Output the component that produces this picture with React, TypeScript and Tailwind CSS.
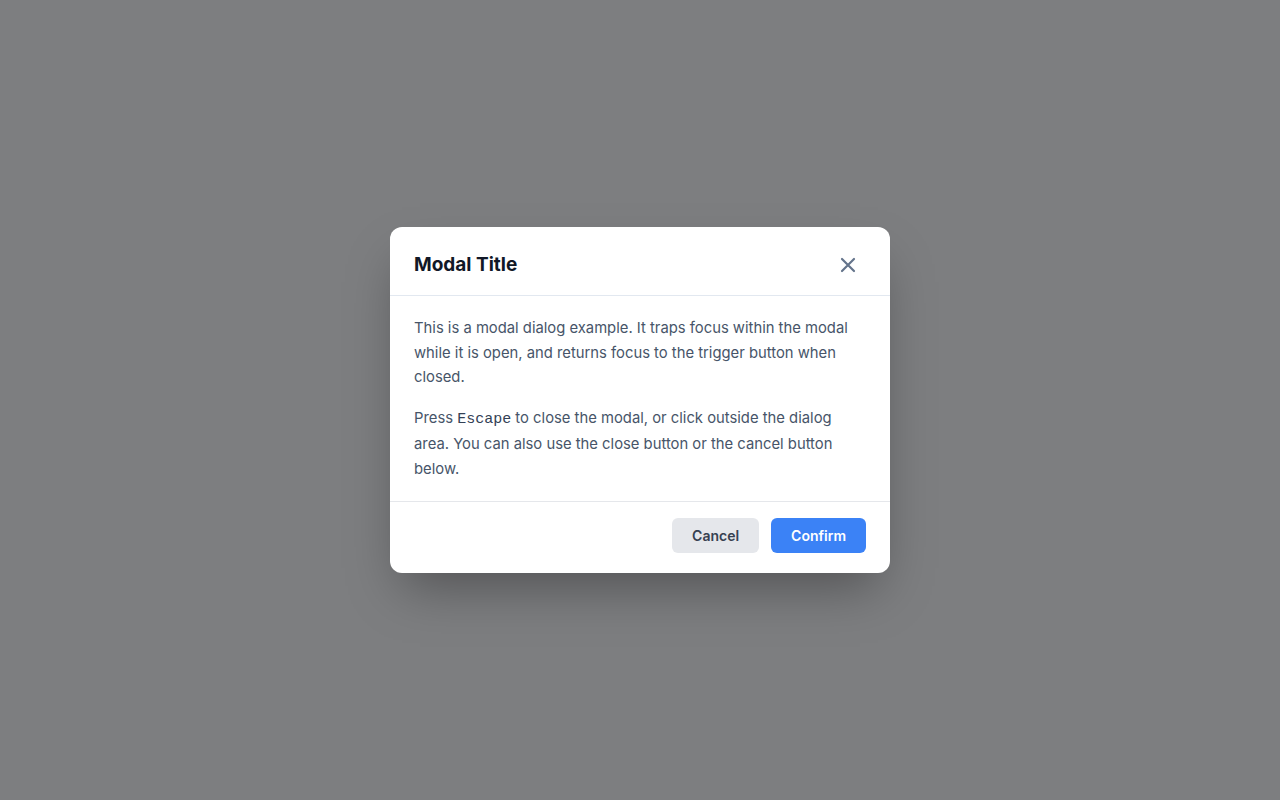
import React from "react";

const App = () => {
  return (
    <div className="min-h-screen w-full flex items-center justify-center bg-[#7d7e80] font-['Inter',sans-serif]">
      {/* Dialog */}
      <div className="w-[500px] bg-white rounded-xl shadow-[0_25px_50px_-12px_rgba(0,0,0,0.35)]">
        {/* Header */}
        <div className="flex items-center justify-between pl-6 pr-7 pt-6 pb-4 border-b border-[#e2e8f0]">
          <h2 className="text-[19px] leading-7 font-bold text-[#111827]">Modal Title</h2>
          <button className="w-7 h-7 flex items-center justify-center text-[#64748b] rounded-md" aria-label="Close">
            <svg width="24" height="24" viewBox="0 0 24 24" fill="none" stroke="currentColor" strokeWidth="2.2" strokeLinecap="round">
              <path d="M6 6l12 12M18 6L6 18" />
            </svg>
          </button>
        </div>

        {/* Body */}
        <div className="px-6 pt-5 pb-5 flex flex-col gap-4 text-[14.8px] leading-[24.5px] text-[#475569]">
          <p>
            This is a modal dialog example. It traps focus within the modal while it is open, and returns focus to the
            trigger button when closed.
          </p>
          <p>
            Press <code className="font-['Liberation_Mono',monospace] text-[15px] text-[#334155]">Escape</code> to close
            the modal, or click outside the dialog area. You can also use the close button or the cancel button below.
          </p>
        </div>

        {/* Footer */}
        <div className="flex justify-end gap-3 px-6 pt-4 pb-5 border-t border-[#e5e7eb]">
          <button className="h-[35px] px-5 rounded-md bg-[#e5e7eb] text-sm font-semibold text-[#374151]">Cancel</button>
          <button className="h-[35px] px-5 rounded-md bg-[#3b82f6] text-sm font-semibold text-white">Confirm</button>
        </div>
      </div>
    </div>
  );
};

export default App;
